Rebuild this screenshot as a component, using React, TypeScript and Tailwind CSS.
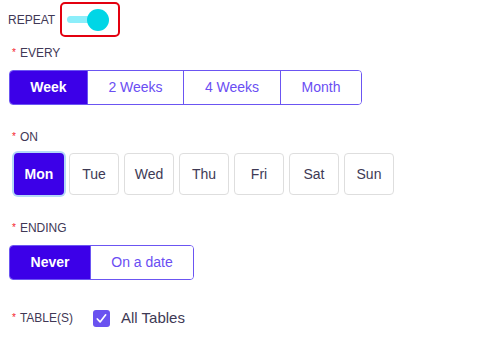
const FONT = "font-['Liberation_Sans',Arial,sans-serif]";

function Label({ text, required = true }: { text: string; required?: boolean }) {
    return (
        <div className="flex items-center text-[12px] text-[#3f3856] leading-none">
            {required && <span className="text-[#f5222d] mr-[4px] text-[10px]">*</span>}
            {text}
        </div>
    );
}

function Segmented({ items, widths, active }: { items: string[]; widths: string[]; active: number }) {
    return (
        <div className="flex h-[35px] rounded-[4px] border border-[#6b55f2] overflow-hidden">
            {items.map((item, i) => (
                <button
                    key={item}
                    className={`${widths[i]} h-full text-[14px] flex items-center justify-center ${
                        i > 0 ? "border-l border-[#6b55f2]" : ""
                    } ${i === active ? "bg-[#3c00e8] text-white font-bold" : "bg-white text-[#6a4ef3]"}`}
                >
                    {item}
                </button>
            ))}
        </div>
    );
}

const days = ["Mon", "Tue", "Wed", "Thu", "Fri", "Sat", "Sun"];

export default function App() {
    return (
        <div className={`${FONT} w-[482px] h-[357px] bg-white relative`}>
            {/* Repeat toggle */}
            <div className="flex items-center pt-[2px] pl-[8px] h-[37px]">
                <span className="text-[12px] text-[#3f3856] mr-[5px]">REPEAT</span>
                <div className="w-[60px] h-[35px] border-2 border-[#e3000f] rounded-[5px] flex items-center pl-[5px]">
                    <div className="relative w-[44px] h-[22px] flex items-center">
                        <div className="w-[36px] h-[7px] rounded-full bg-[#8ceefa]" />
                        <div className="absolute left-[20px] top-0 w-[22px] h-[22px] rounded-full bg-[#00d6e6]" />
                    </div>
                </div>
            </div>

            {/* Every */}
            <div className="pl-[9px] pt-[10px]">
                <div className="pl-[3px]"><Label text="EVERY" /></div>
                <div className="mt-[11px] w-[353px]">
                    <Segmented
                        items={["Week", "2 Weeks", "4 Weeks", "Month"]}
                        widths={["w-[77px]", "w-[96px]", "w-[97px]", "flex-1"]}
                        active={0}
                    />
                </div>
            </div>

            {/* On */}
            <div className="pl-[9px] pt-[26px]">
                <div className="pl-[3px]"><Label text="ON" /></div>
                <div className="flex gap-[5px] mt-[10px] pl-[5px]">
                    {days.map((d, i) => (
                        <button
                            key={d}
                            className={`w-[50px] h-[42px] rounded-[4px] text-[14px] flex items-center justify-center ${
                                i === 0
                                    ? "bg-[#3c00e8] text-white font-bold ring-2 ring-[#b5d8f7]"
                                    : "bg-white text-[#3e3a55] border border-[#dedede]"
                            }`}
                        >
                            {d}
                        </button>
                    ))}
                </div>
            </div>

            {/* Ending */}
            <div className="pl-[9px] pt-[27px]">
                <div className="pl-[3px]"><Label text="ENDING" /></div>
                <div className="mt-[11px] w-[185px]">
                    <Segmented items={["Never", "On a date"]} widths={["w-[80px]", "flex-1"]} active={0} />
                </div>
            </div>

            {/* Tables */}
            <div className="pl-[12px] pt-[27px] flex items-center">
                <Label text="TABLE(S)" />
                <div className="ml-[20px] w-[17px] h-[17px] rounded-[3px] bg-[#6a52f0] flex items-center justify-center">
                    <svg width="13" height="13" viewBox="0 0 14 14" fill="none">
                        <path d="M2.5 7.5l3 3.2L11.5 3" stroke="white" strokeWidth="1.8" strokeLinecap="round" strokeLinejoin="round" />
                    </svg>
                </div>
                <span className="ml-[11px] text-[15px] text-[#3e3a55]">All Tables</span>
            </div>
        </div>
    );
}
